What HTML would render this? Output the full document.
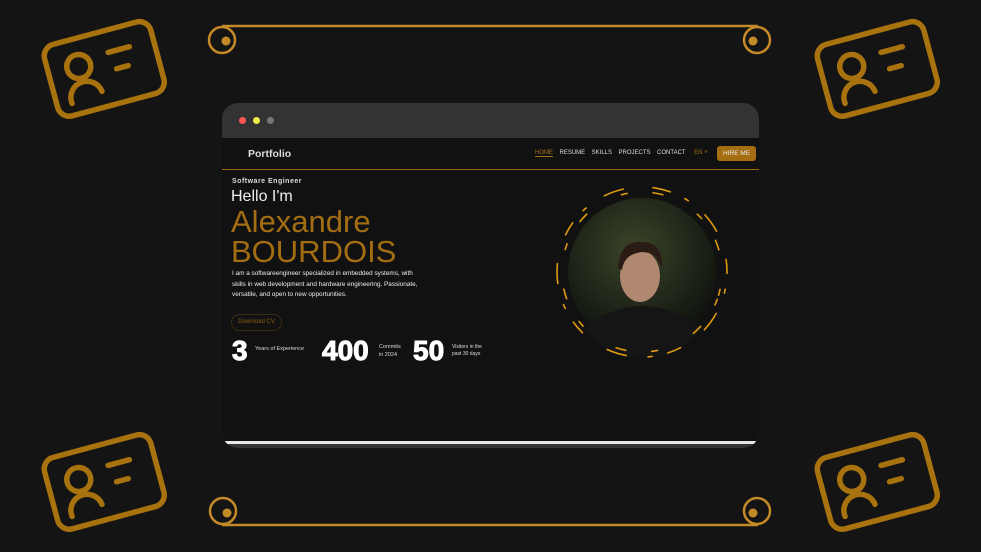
<!DOCTYPE html>
<html><head><meta charset="utf-8"><style>
*{margin:0;padding:0;box-sizing:border-box}
body{width:981px;height:552px;background:#141414;position:relative;overflow:hidden;font-family:"Liberation Sans",sans-serif}
.abs{position:absolute}
.win{left:222px;top:103px;width:537px;height:345px;border-radius:16px;background:#333;overflow:hidden}
.bar{height:35px;position:relative}
.dot{position:absolute;top:14px;width:7px;height:7px;border-radius:50%}
.content{position:absolute;left:0;top:35px;width:537px;height:303px;background:#111}
.nav{position:absolute;left:0;top:0;width:537px;height:32px;border-bottom:1px solid #a06a10}
.nav .logo{position:absolute;left:26px;top:10px;color:#ddd;font-weight:bold;font-size:10.5px}
.nav .links{position:absolute;left:313px;top:12px;font-size:6px;color:#ddd;white-space:nowrap}
.nav .links span{margin-right:6.5px}
.hire{position:absolute;left:495px;top:8px;width:39px;height:15px;background:#a56e12;border-radius:3px;color:#eee;font-size:6.5px;text-align:center;line-height:15px}
.gold{color:#a36d12}
.num{color:#fff;font-weight:900;font-size:28px;-webkit-text-stroke:1px #fff}
</style></head><body>
<svg class="abs" style="left:0;top:0" width="981" height="552">
<defs>
<g id="card" fill="none" stroke="#a8720f" stroke-width="5.5" stroke-linecap="round">
<rect x="-55" y="-36" width="110" height="74" rx="12"/>
<circle cx="-24" cy="-8" r="12"/>
<path d="M-40 26 a16 16 0 0 1 32 -4"/>
<path d="M8 -14 L30 -14 M12 4 L24 4"/>
</g>
</defs>
<use href="#card" transform="translate(104,68) rotate(-15)"/>
<use href="#card" transform="translate(877,68) rotate(-15)"/>
<use href="#card" transform="translate(104,481) rotate(-15)"/>
<use href="#card" transform="translate(877,481) rotate(-15)"/>
<g stroke="#c58a28" stroke-width="2.5" fill="none">
<line x1="222" y1="26" x2="758" y2="26"/>
<line x1="222" y1="525" x2="758" y2="525"/>
<circle cx="222" cy="40" r="13"/><circle cx="757" cy="40" r="13"/>
<circle cx="223" cy="511" r="13"/><circle cx="757" cy="511" r="13"/>
</g>
<g fill="#c58a28"><circle cx="226" cy="41" r="4.5"/><circle cx="753" cy="41" r="4.5"/><circle cx="227" cy="513" r="4.5"/><circle cx="753" cy="513" r="4.5"/></g>
</svg>
<div class="abs win">
<div class="bar"><div class="dot" style="left:17px;background:#f55"></div><div class="dot" style="left:31px;background:#ee4"></div><div class="dot" style="left:45px;background:#777"></div></div>
<div class="content">
<div class="nav"><div class="logo">Portfolio</div>
<div class="links"><span class="gold" style="border-bottom:1px solid #a36d12">HOME</span><span>RESUME</span><span>SKILLS</span><span>PROJECTS</span><span>CONTACT</span><span class="gold" style="margin-left:2px">EN ˅</span></div>
<div class="hire">HIRE ME</div></div>
<div class="abs" style="left:10px;top:40px;font-size:7px;font-weight:bold;color:#ddd;letter-spacing:.5px">Software Engineer</div>
<div class="abs" style="left:9px;top:50px;font-size:16px;color:#eee">Hello I'm</div>
<div class="abs gold" style="left:9px;top:69px;font-size:31px;line-height:30px">Alexandre<br>BOURDOIS</div>
<div class="abs" style="left:10px;top:131px;font-size:6.4px;line-height:10.5px;color:#eee;width:196px">I am a softwareengineer specialized in embedded systems, with skills in web development and hardware engineering. Passionate, versatile, and open to new opportunities.</div>
<div class="abs" style="left:9px;top:176px;width:51px;height:17px;border:1px solid #3a2c14;border-radius:9px;color:#8a5c12;font-size:6px;text-align:center;line-height:15px">Download CV</div>
<div class="abs num" style="left:10px;top:197px">3</div>
<div class="abs" style="left:33px;top:208px;color:#ddd;font-size:5.5px">Years of Experience</div>
<div class="abs num" style="left:100px;top:197px">400</div>
<div class="abs" style="left:157px;top:205px;color:#ddd;font-size:5.5px;line-height:8px">Commits<br>in 2024</div>
<div class="abs num" style="left:191px;top:197px">50</div>
<div class="abs" style="left:230px;top:206px;color:#ddd;font-size:5px;line-height:7px">Visitors in the<br>past 30 days</div>
<svg class="abs" style="left:320px;top:40px" width="190" height="185">
<defs><radialGradient id="ph" cx="45%" cy="35%" r="70%"><stop offset="0" stop-color="#3c4428"/><stop offset=".6" stop-color="#1e2418"/><stop offset="1" stop-color="#0d0f0c"/></radialGradient></defs>
<circle cx="100" cy="94" r="74" fill="url(#ph)"/>
<path d="M40 150 Q70 128 100 128 Q130 128 160 150 A74 74 0 0 1 40 150Z" fill="#151515"/>
<ellipse cx="98" cy="98" rx="20" ry="26" fill="#b08870"/>
<path d="M76 90 Q78 62 100 64 Q122 64 120 92 Q116 74 100 74 Q82 76 80 92Z" fill="#2a1c14"/>
<g fill="none" stroke="#e09a10" stroke-width="1.6" stroke-linecap="round">
<circle cx="100" cy="94" r="85" stroke-dasharray="14 16 4 22 20 30" transform="rotate(-80 100 94)"/>
<circle cx="100" cy="94" r="80" stroke-dasharray="6 26 10 40" transform="rotate(20 100 94)"/>
</g>
</svg>
</div>
<div class="abs" style="left:0;top:338px;width:537px;height:3px;background:#e6e6e6"></div>
</div>
</body></html>
